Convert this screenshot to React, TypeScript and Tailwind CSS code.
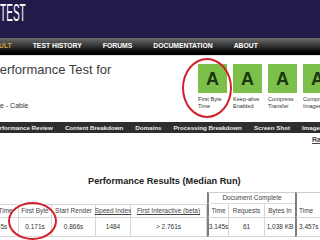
import React from "react";

const cols = [
  { w: "w-[42px]", head: "Load Time", data: "2.945s", extra: "" },
  { w: "w-[33px]", head: "First Byte", data: "0.171s", extra: "" },
  { w: "w-[44px]", head: "Start Render", data: "0.866s", extra: "" },
  { w: "w-[35px]", head: "Speed Index", data: "1484", extra: "underline" },
  { w: "w-[76px]", head: "First Interactive (beta)", data: "> 2.761s", extra: "underline" },
];

function Grade({ label1, label2 }: { label1: string; label2: string }) {
  return (
    <div className="w-[29px] flex flex-col shrink-0">
      <div className="w-[29px] h-[29px] bg-[#7cc04a] flex items-center justify-center text-[18px] font-bold text-[#1c3514] leading-none">
        A
      </div>
      <div className="mt-[3px] text-[5.6px] leading-[7px] text-[#333] whitespace-nowrap">
        {label1}
        <br />
        {label2}
      </div>
    </div>
  );
}

export default function App() {
  return (
    <div className="relative w-[320px] h-[240px] overflow-hidden bg-white font-['Liberation_Sans',Arial,sans-serif]">
      {/* header */}
      <div className="h-[38px] bg-[#221b49] overflow-hidden">
        <div className="pt-[1px] text-[24px] leading-[24px] text-white origin-left scale-x-[0.42] whitespace-nowrap">
          TEST
        </div>
      </div>
      {/* nav */}
      <div className="h-[17px] bg-linear-to-b from-[#6e6e6e] via-[#303030] to-[#000000] flex items-center gap-[21px] ml-[-1px] text-[6.8px] font-bold text-white whitespace-nowrap overflow-hidden">
        <span className="text-[#c9a64c]">ULT</span>
        <span>TEST HISTORY</span>
        <span>FORUMS</span>
        <span>DOCUMENTATION</span>
        <span>ABOUT</span>
      </div>
      <div className="h-px bg-[#e4e4e4]" />
      {/* title + grades */}
      <div className="h-[66px] flex">
        <div className="w-[198px] shrink-0 overflow-hidden">
          <div className="ml-[-9px] mt-[6px] text-[13px] leading-[16px] text-[#3c3c3c] whitespace-nowrap">
            Performance Test for
          </div>
          <div className="ml-[-21px] mt-[24px] text-[7px] leading-[8px] text-[#333] whitespace-nowrap">
            Chrome - Cable
          </div>
        </div>
        <div className="flex gap-[6px] pt-[8px] overflow-hidden">
          <Grade label1="First Byte" label2="Time" />
          <Grade label1="Keep-alive" label2="Enabled" />
          <Grade label1="Compress" label2="Transfer" />
          <Grade label1="Compress" label2="Images" />
        </div>
      </div>
      {/* tab bar */}
      <div className="h-[11px] bg-[#2e2e2e] flex items-center gap-[12px] ml-[-8px] text-[6.2px] font-bold text-[#ececec] whitespace-nowrap overflow-hidden">
        <span>Performance Review</span>
        <span>Content Breakdown</span>
        <span>Domains</span>
        <span>Processing Breakdown</span>
        <span>Screen Shot</span>
        <span>Image Analysis</span>
      </div>
      {/* link row */}
      <div className="h-[14px] flex justify-between items-center overflow-hidden text-[7px] whitespace-nowrap">
        <span className="ml-[-20px] text-[#999]">Tests</span>
        <span className="mr-[-41px] font-bold text-[#444] underline">Raw page data</span>
      </div>
      {/* results title */}
      <div className="mt-[29px] h-[11px] pl-[88px] text-[9.2px] leading-[11px] font-bold text-[#222] whitespace-nowrap">
        Performance Results (Median Run)
      </div>
      {/* table */}
      <div className="mt-[5px] ml-[-23px] text-[6.5px] text-[#444] whitespace-nowrap">
        <div className="flex h-[12px]">
          <div className="w-[230px] shrink-0" />
          <div className="w-[88px] shrink-0 border-l-2 border-[#7d7d7d] border-t border-t-[#cfcfcf] border-b border-b-[#dcdcdc] flex items-center justify-center">
            Document Complete
          </div>
          <div className="w-[45px] shrink-0 border-l-2 border-[#7d7d7d] border-t border-t-[#cfcfcf]" />
        </div>
        <div className="flex h-[13px]">
          {cols.map((c, i) => (
            <div
              key={i}
              className={`${c.w} shrink-0 border-r border-[#d6d6d6] border-t flex items-center justify-center`}
            >
              <span className={c.extra}>{c.head}</span>
            </div>
          ))}
          <div className="w-[22px] shrink-0 border-l-2 border-l-[#7d7d7d] border-r border-[#d6d6d6] flex items-center justify-center">
            Time
          </div>
          <div className="w-[36px] shrink-0 border-r border-[#d6d6d6] flex items-center justify-center">
            Requests
          </div>
          <div className="w-[30px] shrink-0 flex items-center justify-center">Bytes In</div>
          <div className="w-[45px] shrink-0 border-l-2 border-l-[#7d7d7d] flex items-center pl-[2px]">
            Time
          </div>
        </div>
        <div className="flex h-[20px] text-[#333]">
          {cols.map((c, i) => (
            <div
              key={i}
              className={`${c.w} shrink-0 border-r border-[#d6d6d6] border-t border-b flex items-center justify-center`}
            >
              {c.data}
            </div>
          ))}
          <div className="w-[22px] shrink-0 border-l-2 border-l-[#7d7d7d] border-r border-[#d6d6d6] border-t border-b flex items-center justify-center">
            3.145s
          </div>
          <div className="w-[36px] shrink-0 border-r border-[#d6d6d6] border-t border-b flex items-center justify-center">
            61
          </div>
          <div className="w-[30px] shrink-0 border-t border-b border-[#d6d6d6] flex items-center justify-center">
            1,038 KB
          </div>
          <div className="w-[45px] shrink-0 border-l-2 border-l-[#7d7d7d] border-t border-b border-[#d6d6d6] flex items-center pl-[2px]">
            3.457s
          </div>
        </div>
      </div>
      {/* red circles */}
      <div className="absolute left-[182px] top-[58px] w-[50px] h-[60px] rounded-[50%] border-2 border-[#d2202b]" />
      <div className="absolute left-[8px] top-[202px] w-[49px] h-[38px] rounded-[50%] border-2 border-[#d2202b]" />
    </div>
  );
}
